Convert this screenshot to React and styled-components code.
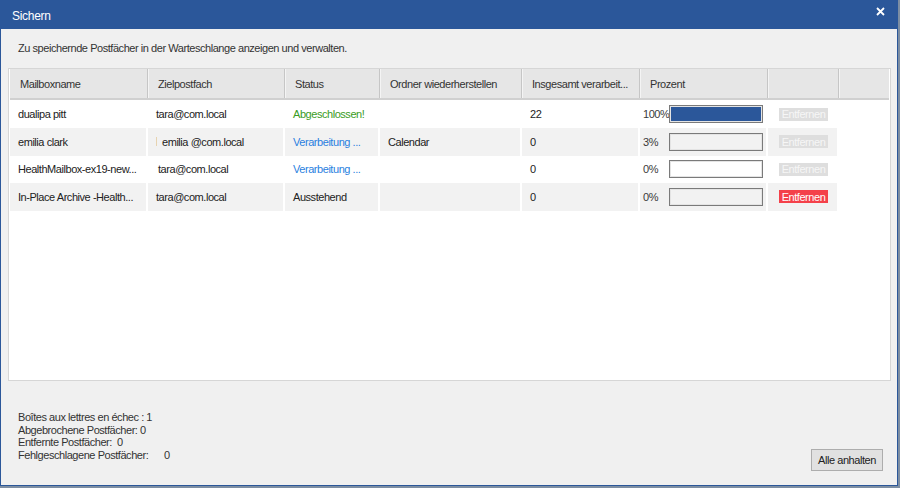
import React from 'react';
import styled, {createGlobalStyle} from 'styled-components';

const Global = createGlobalStyle`
    html, body {
        margin: 0;
        padding: 0;
        background: #7d8ea3;
    }
    * {
        box-sizing: border-box;
    }
`;

const Window = styled.div`
    width: 898px;
    height: 486px;
    border: 1px solid #2b579a;
    border-top: none;
    background: #f0f0f0;
    display: flex;
    flex-direction: column;
    font-family: "Liberation Sans", Arial, sans-serif;
    font-size: 11px;
    letter-spacing: -0.45px;
    color: #222;
`;

const TitleBar = styled.div`
    height: 29px;
    flex: none;
    background: #2b579a;
    color: #fff;
    display: flex;
    align-items: center;
    justify-content: space-between;
    padding: 3px 10px 0 11px;
    font-size: 12px;
    letter-spacing: -0.3px;
`;

const CloseButton = styled.div`
    width: 14px;
    height: 14px;
    display: flex;
    align-items: center;
    justify-content: center;
    margin-top: -10px;
    cursor: pointer;
`;

const Intro = styled.div`
    height: 39px;
    flex: none;
    padding: 13px 0 0 17px;
    color: #333;
`;

const Panel = styled.div`
    margin-left: 7px;
    width: 883px;
    height: 313px;
    flex: none;
    border: 1px solid #d6d6d6;
    background: #fff;
    padding: 0 0 0 1px;
`;

const columns = '138px 137px 95px 142px 118px 128px 71px 1fr';

const HeaderRow = styled.div`
    display: grid;
    grid-template-columns: ${columns};
    height: 31px;
    background: #e6e6e6;
    border-bottom: 2px solid #d0d0d0;
    margin-right: 1px;
`;

const HeaderCell = styled.div`
    display: flex;
    align-items: center;
    padding-left: 10px;
    color: #333;
    border-right: 1px solid #c6c6c6;
    box-shadow: 1px 0 0 #f4f4f4;
    white-space: nowrap;
    overflow: hidden;
`;

const Row = styled.div`
    display: grid;
    grid-template-columns: ${columns};
    height: ${props => props.$h || 27.5}px;
`;

const Cell = styled.div`
    display: flex;
    align-items: center;
    padding-left: ${props => props.$pad ?? 8}px;
    background: ${props => (props.$striped ? '#f2f2f2' : '#fff')};
    border-right: 2px solid #fff;
    white-space: nowrap;
    overflow: hidden;
    color: ${props => props.$color || '#222'};
`;

const Filler = styled.div`
    background: #fff;
`;

const Marker = styled.span`
    display: inline-block;
    width: 1px;
    height: 9px;
    background: #e7d3b0;
    margin-right: 5px;
`;

const Percent = styled.span`
    width: 26px;
    color: #3a3a3a;
`;

const ProgressBox = styled.div`
    width: 94px;
    height: 18px;
    border: 1px solid #7a7a7a;
    box-shadow: inset 0 0 0 1px #e4e4e4;
    background: ${props => (props.$striped ? '#f2f2f2' : '#fff')};
    padding: 1px;
`;

const ProgressFill = styled.div`
    height: 100%;
    background: #2b579a;
`;

const RemoveButton = styled.span`
    margin-left: 3px;
    width: 49px;
    height: 13px;
    display: flex;
    align-items: center;
    justify-content: center;
    background: ${props => (props.$active ? '#f4414a' : '#dedede')};
    color: ${props => (props.$active ? '#fff' : '#f6f6f6')};
    font-size: 11px;
`;

const Footer = styled.div`
    flex: 1;
    display: flex;
    justify-content: space-between;
    align-items: flex-end;
    padding: 0 14px 14px 17px;
`;

const Stats = styled.div`
    line-height: 12.5px;
    color: #333;
    margin-bottom: 10px;
`;

const StatLine = styled.div`
    white-space: pre;
`;

const ActionButton = styled.button`
    width: 72px;
    height: 22px;
    background: #e1e1e1;
    border: 1px solid #adadad;
    font-family: "Liberation Sans", Arial, sans-serif;
    font-size: 11px;
    letter-spacing: -0.45px;
    color: #222;
    padding: 0;
    cursor: pointer;
`;

const headers = [
    'Mailboxname',
    'Zielpostfach',
    'Status',
    'Ordner wiederherstellen',
    'Insgesamt verarbeit...',
    'Prozent',
    '',
];

const rows = [
    {name: 'dualipa pitt', target: 'tara@com.local', status: 'Abgeschlossen!', statusColor: '#3a9c24', folder: '', total: '22', pct: 100, active: false, h: 28},
    {name: 'emilia clark', target: 'emilia @com.local', marker: true, status: 'Verarbeitung ...', statusColor: '#2a7fe0', folder: 'Calendar', total: '0', pct: 3, active: false},
    {name: 'HealthMailbox-ex19-new...', target: 'tara@com.local', indent: 10, status: 'Verarbeitung ...', statusColor: '#2a7fe0', folder: '', total: '0', pct: 0, active: false},
    {name: 'In-Place Archive -Health...', target: 'tara@com.local', status: 'Ausstehend', statusColor: '#222', folder: '', total: '0', pct: 0, active: true},
];

export default function App() {
    return (
        <>
            <Global/>
            <Window>
                <TitleBar>
                    <span>Sichern</span>
                    <CloseButton>
                        <svg width="9" height="9" viewBox="0 0 9 9">
                            <path d="M1 1 L8 8 M8 1 L1 8" stroke="#fff" strokeWidth="1.8"/>
                        </svg>
                    </CloseButton>
                </TitleBar>

                <Intro>Zu speichernde Postfächer in der Warteschlange anzeigen und verwalten.</Intro>

                <Panel>
                    <HeaderRow>
                        {headers.map((h, i) => <HeaderCell key={i}>{h}</HeaderCell>)}
                        <div/>
                    </HeaderRow>
                    {rows.map((r, i) => {
                        const striped = i % 2 === 1;
                        return (
                            <Row key={i} $h={r.h}>
                                <Cell $striped={striped}>{r.name}</Cell>
                                <Cell $striped={striped} $pad={r.indent || 8}>
                                    {r.marker && <Marker/>}
                                    {r.target}
                                </Cell>
                                <Cell $striped={striped} $color={r.statusColor}>{r.status}</Cell>
                                <Cell $striped={striped}>{r.folder}</Cell>
                                <Cell $striped={striped}>{r.total}</Cell>
                                <Cell $striped={striped} $pad={3}>
                                    <Percent>{r.pct}%</Percent>
                                    <ProgressBox $striped={striped}>
                                        {r.pct === 100 && <ProgressFill/>}
                                    </ProgressBox>
                                </Cell>
                                <Cell $striped={striped} $pad={8}>
                                    <RemoveButton $active={r.active}>Entfernen</RemoveButton>
                                </Cell>
                                <Filler/>
                            </Row>
                        );
                    })}
                </Panel>

                <Footer>
                    <Stats>
                        <StatLine>Boîtes aux lettres en échec : 1</StatLine>
                        <StatLine>Abgebrochene Postfächer: 0</StatLine>
                        <StatLine>Entfernte Postfächer:  0</StatLine>
                        <StatLine>Fehlgeschlagene Postfächer:      0</StatLine>
                    </Stats>
                    <ActionButton>Alle anhalten</ActionButton>
                </Footer>
            </Window>
        </>
    );
}
